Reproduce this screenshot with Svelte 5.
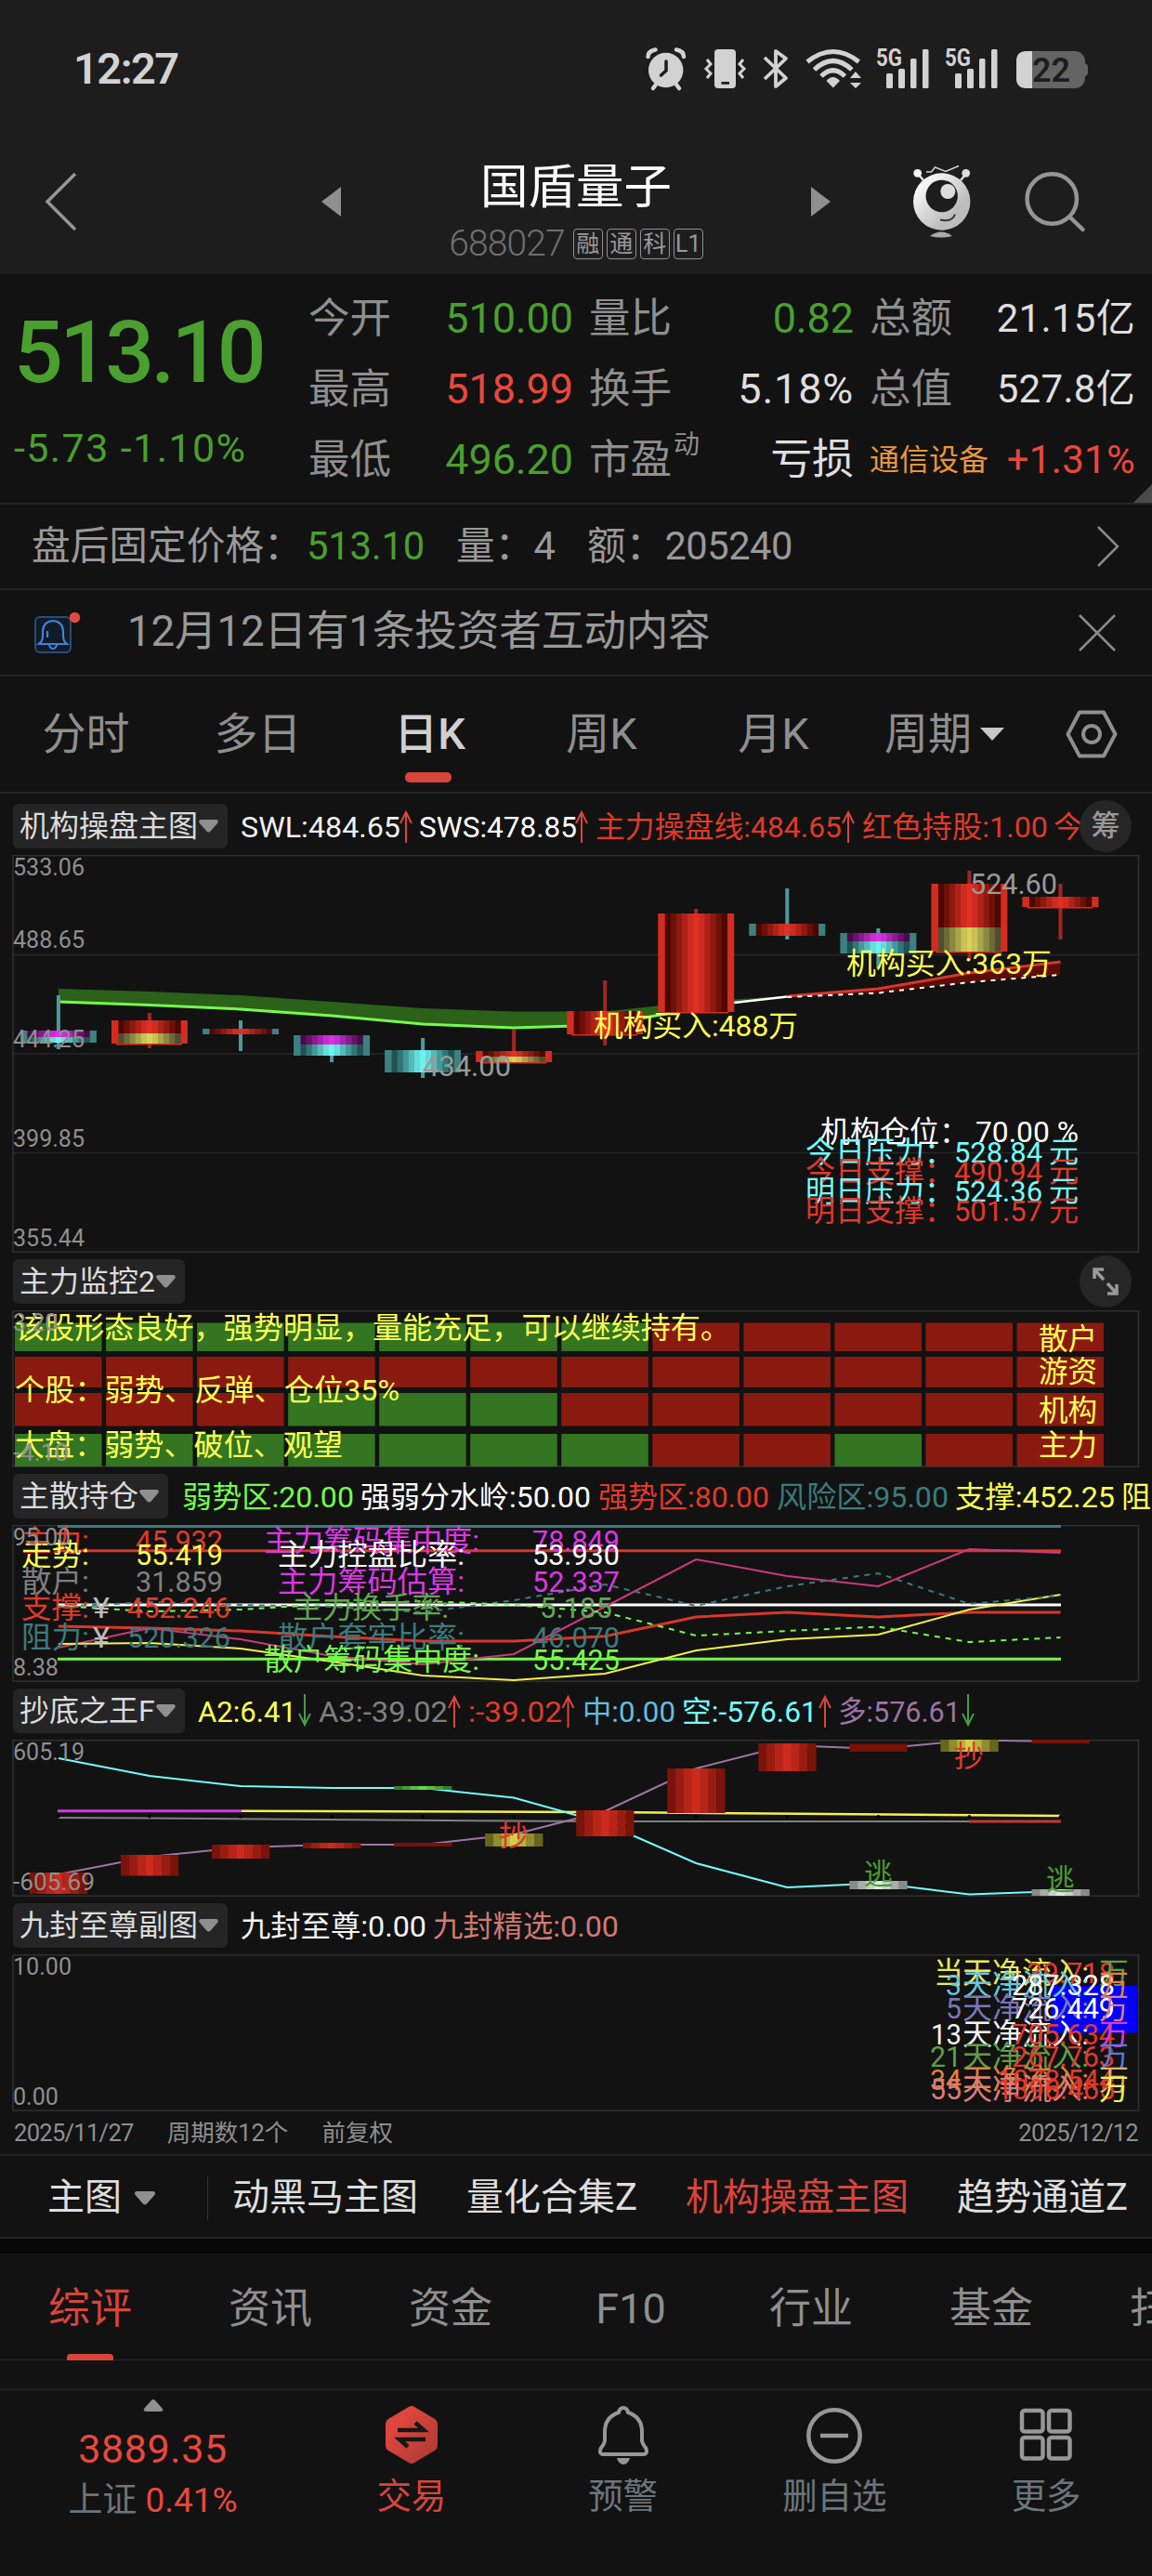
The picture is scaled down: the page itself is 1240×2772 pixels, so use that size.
<script lang="ts">
  type Label = { x: number; y: number; w?: number; t: string; c: string; s?: number };

  const RED = "#e0392b";
  const GREEN = "#75fb4c";
  const YELLOW = "#ffff55";
  const CYAN = "#75fbfd";
  const TEAL = "#3d7a7c";
  const MAGENTA = "#dc37e6";
  const GRAY = "#8f8f8f";

  const quotes = [
    { k: "今开", v: "510.00", c: "green" },
    { k: "量比", v: "0.82", c: "green" },
    { k: "总额", v: "21.15亿", c: "white small" },
    { k: "最高", v: "518.99", c: "red" },
    { k: "换手", v: "5.18%", c: "white wide" },
    { k: "总值", v: "527.8亿", c: "white small" },
    { k: "最低", v: "496.20", c: "green" },
    { k: "市盈", sup: "动", v: "亏损", c: "white" },
    { k: "通信设备", kc: "sector", v: "+1.31%", c: "red small" },
  ];

  const periods = ["分时", "多日", "日K", "周K", "月K"];
  const sections = ["综评", "资讯", "资金", "F10", "行业", "基金", "扫雷"];
  const presets = ["动黑马主图", "量化合集Z", "机构操盘主图", "趋势通道Z"];

  // twelve trading days, evenly spaced
  const cx = (i: number) => 62.9 + 98.05 * i;
  const path = (ys: number[], from = 0) =>
    ys.map((y, i) => `${cx(i + from).toFixed(1)},${y}`).join(" ");

  function mix(a: string, b: string, t: number) {
    const p = (s: string, i: number) => parseInt(s.slice(i, i + 2), 16);
    const m = [1, 3, 5].map((i) => Math.round(p(a, i) + (p(b, i) - p(a, i)) * t));
    return `rgb(${m.join(",")})`;
  }

  const shades: Record<string, [string, string]> = {
    red: ["#4d0700", "#e03024"],
    purple: ["#470a4b", "#dc30e6"],
    yellow: ["#4f4d30", "#d6d358"],
    cyan: ["#1f5252", "#70f0f0"],
    barRed: ["#7a130a", "#cc2b1d"],
    barYellow: ["#66661c", "#cfcf4a"],
    barGreen: ["#3a7a28", "#63d848"],
    barGray: ["#8a8a8a", "#dceadc"],
    flat: ["#771109", "#771109"],
  };

  // vertical strips that fake a cylinder, darkest at the edges
  function strips(x: number, w: number, n: number, kind: string) {
    const [dark, bright] = shades[kind];
    const half = (n - 1) / 2;
    return Array.from({ length: n }, (_, i) => ({
      x: x + (w / n) * i,
      w: w / n + 0.3,
      fill: mix(dark, bright, Math.min(1, (1 - Math.abs(i - half) / half) * 1.1)),
    }));
  }

  // wick top/bottom, body top/split/bottom, upper and lower fills
  const candles = [
    { wick: [1071, 1129], body: [1109, 1116, 1122], up: "purple", low: "cyan", rise: false },
    { wick: [1090, 1128], body: [1098, 1112, 1123], up: "red", low: "yellow", rise: true },
    { wick: [1098, 1131], body: [1107, 1113, 1113], up: "red", low: "red", rise: false },
    { wick: [1114, 1143], body: [1114, 1124, 1136], up: "purple", low: "cyan", rise: false },
    { wick: [1117, 1160], body: [1130, 1130, 1154], up: "cyan", low: "cyan", rise: false },
    { wick: [1108, 1143], body: [1131, 1137, 1143], up: "red", low: "yellow", rise: true },
    { wick: [1055, 1125], body: [1088, 1113, 1113], up: "red", low: "red", rise: true },
    { wick: [978, 1089], body: [983, 1089, 1089], up: "red", low: "red", rise: true },
    { wick: [956, 1011], body: [994, 1007, 1007], up: "red", low: "red", rise: false },
    { wick: [999, 1042], body: [1004, 1013, 1026], up: "purple", low: "cyan", rise: false },
    { wick: [937, 1033], body: [951, 998, 1024], up: "red", low: "yellow", rise: true },
    { wick: [951, 1011], body: [965, 976, 976], up: "red", low: "red", rise: true },
  ];

  const bandTop = [1064, 1067, 1071, 1078, 1085, 1088.5, 1088.5, 1078, 1072];
  const bandLow = [1078, 1081.5, 1086, 1093, 1102, 1106, 1103, 1085, 1072];

  const mainLabels: Label[] = [
    { x: 14, y: 942, w: 77, t: "533.06", c: GRAY, s: 26 },
    { x: 14, y: 1020, w: 77, t: "488.65", c: GRAY, s: 26 },
    { x: 14, y: 1127, w: 77, t: "444.25", c: GRAY, s: 26 },
    { x: 14, y: 1233.5, w: 77, t: "399.85", c: GRAY, s: 26 },
    { x: 14, y: 1340.5, w: 77, t: "355.44", c: GRAY, s: 26 },
    { x: 455, y: 1158, w: 95, t: "434.00", c: "#9a9a9a" },
    { x: 1044, y: 962, w: 94, t: "524.60", c: "#9a9a9a" },
    { x: 639, y: 1115, w: 220, t: "机构买入:488万", c: YELLOW },
    { x: 911, y: 1048, w: 221, t: "机构买入:363万", c: YELLOW },
    { x: 883, y: 1229, w: 160, t: "机构仓位：", c: "#fff" },
    { x: 1050, y: 1229, w: 111, t: "70.00 %", c: "#fff" },
    ...[
      ["今日压力：", "528.84", 1250.5, CYAN],
      ["今日支撑：", "490.94", 1271.5, RED],
      ["明日压力：", "524.36", 1292.5, CYAN],
      ["明日支撑：", "501.57", 1313.5, RED],
    ].flatMap(([k, v, y, c]: any) => [
      { x: 867, y, w: 160, t: k, c },
      { x: 1027, y, w: 95, t: v, c },
      { x: 1129, y, w: 32, t: "元", c },
    ]),
  ];

  // rows of the monitor heat map, 1 = red, 0 = green
  const heat = [
    { y: 1423.5, h: 30.5, cells: "000000011111" },
    { y: 1460, h: 33, cells: "111111111111" },
    { y: 1499, h: 35.5, cells: "111000111111" },
    { y: 1543, h: 35, cells: "000000011011" },
  ];

  const heatLabels: Label[] = [
    { x: 16, y: 1440, w: 770, t: "该股形态良好，强势明显，量能充足，可以继续持有。", c: YELLOW },
    { x: 16, y: 1507, w: 414, t: "个股：弱势、反弹、仓位35%", c: YELLOW },
    { x: 16, y: 1566, w: 353, t: "大盘：弱势、破位、观望", c: YELLOW },
    { x: 1118, y: 1451.5, w: 63, t: "散户", c: YELLOW },
    { x: 1118, y: 1486.5, w: 63, t: "游资", c: YELLOW },
    { x: 1118, y: 1528.5, w: 63, t: "机构", c: YELLOW },
    { x: 1118, y: 1565.5, w: 63, t: "主力", c: YELLOW },
    { x: 14, y: 1431.5, w: 48, t: "3.20", c: GRAY, s: 26 },
    { x: 14, y: 1571.5, w: 60, t: "-4.10", c: GRAY, s: 26 },
  ];

  const holdLabels: Label[] = [
    { x: 23, y: 1669, w: 73, t: "主力:", c: RED },
    { x: 146, y: 1669, w: 94, t: "45.932", c: RED },
    { x: 284, y: 1669, w: 232, t: "主力筹码集中度:", c: MAGENTA },
    { x: 573, y: 1669, w: 94, t: "78.849", c: MAGENTA },
    { x: 23, y: 1684, w: 73, t: "走势:", c: YELLOW },
    { x: 146, y: 1684, w: 94, t: "55.419", c: YELLOW },
    { x: 299, y: 1684, w: 201, t: "主力控盘比率:", c: "#fff" },
    { x: 573, y: 1684, w: 94, t: "53.930", c: "#fff" },
    { x: 23, y: 1713, w: 73, t: "散户:", c: "#7f7f7f" },
    { x: 146, y: 1713, w: 94, t: "31.859", c: "#7f7f7f" },
    { x: 299, y: 1713, w: 201, t: "主力筹码估算:", c: MAGENTA },
    { x: 573, y: 1713, w: 94, t: "52.337", c: MAGENTA },
    { x: 23, y: 1741, w: 73, t: "支撑:", c: RED },
    { x: 100, y: 1741, w: 18, t: "¥", c: "#bbb" },
    { x: 137, y: 1741, w: 111, t: "452.246", c: RED },
    { x: 315, y: 1741, w: 168, t: "主力换手率:", c: "#62a652" },
    { x: 581, y: 1741, w: 78, t: "5.185", c: "#62a652" },
    { x: 23, y: 1773, w: 73, t: "阻力:", c: TEAL },
    { x: 100, y: 1773, w: 18, t: "¥", c: "#bbb" },
    { x: 137, y: 1773, w: 111, t: "520.326", c: TEAL },
    { x: 299, y: 1773, w: 201, t: "散户套牢比率:", c: TEAL },
    { x: 573, y: 1773, w: 94, t: "46.070", c: TEAL },
    { x: 284, y: 1797, w: 232, t: "散户筹码集中度:", c: GREEN },
    { x: 573, y: 1797, w: 94, t: "55.425", c: GREEN },
    { x: 14, y: 1662.5, w: 62, t: "95.00", c: GRAY, s: 26 },
    { x: 14, y: 1803, w: 49, t: "8.38", c: GRAY, s: 26 },
  ];

  const bars = [
    [0, 2015, 2038, "barRed"],
    [1, 1996, 2018.5, "barRed"],
    [2, 1985, 2000, "barRed"],
    [3, 1983, 1989, "barRed"],
    [4, 1983, 1987, "flat"],
    [4, 1922, 1926, "barGreen"],
    [5, 1973, 1987, "barYellow"],
    [6, 1948, 1976, "barRed"],
    [7, 1903, 1951, "barRed"],
    [8, 1876, 1906, "barRed"],
    [9, 1876.5, 1885, "flat"],
    [9, 2024, 2033, "barGray"],
    [10, 1871, 1885, "barYellow"],
    [11, 1871, 1876, "flat"],
    [11, 2033, 2040, "barGray"],
  ] as [number, number, number, string][];

  const bottomLabels: Label[] = [
    { x: 14, y: 1893.5, w: 77, t: "605.19", c: GRAY, s: 26 },
    { x: 14, y: 2033.5, w: 88, t: "-605.69", c: GRAY, s: 26 },
    { x: 537, y: 1986, w: 32, t: "抄", c: RED },
    { x: 1027, y: 1901, w: 32, t: "抄", c: RED },
    { x: 930, y: 2028, w: 31, t: "逃", c: "#4b9b33" },
    { x: 1126, y: 2034, w: 31, t: "逃", c: "#4b9b33" },
  ];

  const flowLabels: Label[] = [
    { x: 14, y: 2125, w: 63, t: "10.00", c: GRAY, s: 26 },
    { x: 14, y: 2265, w: 49, t: "0.00", c: GRAY, s: 26 },
    ...[
      ["当", 1005, 32, "39.718", 1105, 2134, "#e8e85a", RED, "#5f9f45"],
      ["3", 1018, 17, "287.328", 1089, 2146.5, "#66c6de", "#fff", "#e0823c"],
      ["5", 1018, 17, "726.449", 1089, 2172, "#7b76b5", "#fff", "#d97d7d"],
      ["13", 1002, 33, "705.634", 1089, 2199.5, "#f2f2f2", RED, MAGENTA],
      ["21", 1001, 34, "267.763", 1089, 2224, "#5f9f45", RED, "#4f80dc"],
      ["34", 1001, 34, "1078.544", 1073, 2248.5, "#e0823c", RED, "#e0b060"],
      ["55", 1001, 34, "1396.465", 1073, 2258.5, "#d97d7d", RED, "#f0f05a"],
    ].flatMap(([d, dx, dw, v, vx, y, c, vc, uc]: any) => [
      { x: dx, y, w: dw, t: d, c },
      { x: 1036, y, w: 136, t: "天净流入:", c },
      { x: vx, y, w: 1200 - vx, t: v, c: vc },
      { x: 1183, y, w: 32, t: "万", c: uc },
    ]),
  ];

  const mainLegend: Label[] = [
    { x: 259, y: 36, w: 172, t: "SWL:484.65", c: "#f0f0f0" },
    { x: 451, y: 36, w: 170, t: "SWS:478.85", c: "#fff" },
    { x: 641, y: 36, w: 265, t: "主力操盘线:484.65", c: RED },
    { x: 928, y: 36, w: 200, t: "红色持股:1.00", c: RED },
    { x: 1134, y: 36, w: 32, t: "今", c: RED },
  ];
  const holdLegend: Label[] = [
    { x: 197, y: 36, w: 185, t: "弱势区:20.00", c: GREEN },
    { x: 389, y: 36, w: 248, t: "强弱分水岭:50.00", c: "#fff" },
    { x: 645, y: 36, w: 184, t: "强势区:80.00", c: RED },
    { x: 837, y: 36, w: 185, t: "风险区:95.00", c: TEAL },
    { x: 1029, y: 36, w: 172, t: "支撑:452.25", c: YELLOW },
    { x: 1208, y: 36, w: 32, t: "阻", c: YELLOW },
  ];
  const bottomLegend: Label[] = [
    { x: 214, y: 36, w: 106, t: "A2:6.41", c: YELLOW },
    { x: 344, y: 36, w: 139, t: "A3:-39.02", c: "#7f7f7f" },
    { x: 505, y: 36, w: 101, t: ":-39.02", c: RED },
    { x: 628, y: 36, w: 100, t: "中:0.00", c: "#62bede" },
    { x: 735, y: 36, w: 146, t: "空:-576.61", c: CYAN },
    { x: 903, y: 36, w: 132, t: "多:576.61", c: "#9e74a5" },
  ];
  const nineLegend: Label[] = [
    { x: 259, y: 36, w: 200, t: "九封至尊:0.00", c: "#f5f5f5" },
    { x: 466, y: 36, w: 200, t: "九封精选:0.00", c: "#d07a76" },
  ];
</script>

{#snippet labels(list: Label[])}
  {#each list as l}
    <text x={l.x} y={l.y} fill={l.c} font-size={l.s ?? 31.5} textLength={l.w} lengthAdjust="spacingAndGlyphs">{l.t}</text>
  {/each}
{/snippet}

{#snippet head(name: string, x: number, list: Label[], ups: number[], downs: number[])}
  <button class="pill">{name}<svg width="21" height="14" viewBox="0 0 21 14"><path d="M2 0h17q3 1 1 4l-7 8q-2.500 3-5 0L1 4q-2-3 1-4z" fill="#8f8f8f" /></svg></button>
  <svg class="legend" width={1240 - x} height="48" viewBox="{x} 0 {1240 - x} 48">
    {@render labels(list)}
    {#each ups as u}
      <path d="M{u} 42V10M{u - 6} 21L{u} 9L{u + 6} 21" stroke="#d8453b" stroke-width="2" fill="none" />
    {/each}
    {#each downs as d}
      <path d="M{d} 6V38M{d - 6} 27L{d} 39L{d + 6} 27" stroke="#4b9b47" stroke-width="2" fill="none" />
    {/each}
  </svg>
{/snippet}

{#snippet strip(x: number, w: number, n: number, kind: string, y1: number, y2: number)}
  {#each strips(x, w, n, kind) as s}
    <rect x={s.x} y={y1} width={s.w} height={y2 - y1} fill={s.fill} />
  {/each}
{/snippet}

<main>
  <header>
    <div class="status">
      <span class="time">12:27</span>
      <svg width="490" height="60" viewBox="688 44 490 60" fill="#d2d2d2">
        <circle cx="716.700" cy="75.500" r="18.700" />
        <path d="M697.500 61q0-6 8-7.500M736 61q0-6-8-7.500M706 91l-3 4M728 91l3 4" stroke="#d2d2d2" stroke-width="4.500" stroke-linecap="round" fill="none" />
        <path d="M717 66v10l-5.500 5" stroke="#1d1d1d" stroke-width="3.500" stroke-linecap="round" fill="none" />
        <rect x="769" y="53" width="23" height="42" rx="4" />
        <rect x="776.500" y="88" width="8.500" height="2.800" fill="#1d1d1d" />
        <path d="M761 64l4 5-5 5 5 5-4 5M800 64l-4 5 5 5-5 5 4 5" stroke="#d2d2d2" stroke-width="3" fill="none" />
        <path d="M823 62l23 22-11 9V55l11 8-23 22" stroke="#d2d2d2" stroke-width="3.800" fill="none" stroke-linejoin="round" />
        <g fill="none" stroke="#d2d2d2" stroke-width="5">
          <path d="M869 66.500q27.700-22 55.400 0" />
          <path d="M876.500 75q20.200-19 40.400 0" />
          <path d="M884 82q12.700-12.500 25.400 0" />
        </g>
        <path d="M889.500 87q7-8 14.500 0l-7.200 7.500z" />
        <path d="M915 84l6-7 6 7zM915 89h12l-6 6z" />
        {#each [0, 74] as dx}
          <text x={943 + dx} y="71" font-size="25" font-weight="700" textLength="28" lengthAdjust="spacingAndGlyphs">5G</text>
          <rect x={954 + dx} y="79" width="7" height="16" rx="1.500" />
          <rect x={967 + dx} y="74" width="7" height="21" rx="1.500" />
          <rect x={980 + dx} y="63" width="6.500" height="32" rx="1.500" />
          <rect x={993 + dx} y="53" width="6.500" height="42" rx="1.500" />
        {/each}
        <rect x="1094" y="55" width="74" height="40" rx="11" fill="#646464" />
        <path d="M1111 55h-6q-11 0-11 11v18q0 11 11 11h6z" />
        <path d="M1168 68q3 1 3 4v6q0 3-3 4z" fill="#646464" />
        <text x="1111" y="88" font-size="36" font-weight="600" fill="#1d1d1d" textLength="41" lengthAdjust="spacingAndGlyphs">22</text>
      </svg>
    </div>
    <div class="nav">
      <svg class="back" width="40" height="68" viewBox="0 0 40 68"><path d="M35 4L5 34l30 30" fill="none" stroke="#959595" stroke-width="3.500" /></svg>
      <svg width="21" height="34" viewBox="0 0 21 34"><path d="M21 1v32L0 17z" fill="#8f8f8f" /></svg>
      <div class="title">
        <h1>国盾量子</h1>
        <div class="code">
          <span>688027</span>
          <i>融</i><i>通</i><i>科</i><i>L1</i>
        </div>
      </div>
      <svg width="21" height="34" viewBox="0 0 21 34"><path d="M0 1v32l21-16z" fill="#8f8f8f" /></svg>
      <svg width="64" height="78" viewBox="982 178 64 78">
        <defs>
          <linearGradient id="face" x1="0" y1="0" x2="1" y2="1">
            <stop offset="0.200" stop-color="#f4f4f4" />
            <stop offset="0.700" stop-color="#bdbdbd" />
          </linearGradient>
        </defs>
        <path d="M988 187l6 7M1040 187l-6 7" stroke="#ddd" stroke-width="2.500" />
        <circle cx="987.700" cy="186.300" r="4.400" fill="#f4f4f4" />
        <circle cx="1039.700" cy="186.300" r="4.400" fill="#ddd" />
        <path d="M997 185h5.500l4-5 11.500 4.500 14-6" stroke="#d0d0d0" stroke-width="1.600" fill="none" />
        <circle cx="1013.700" cy="217" r="30.700" fill="url(#face)" />
        <circle cx="1013.700" cy="211" r="17.200" fill="#1d1d1d" />
        <circle cx="1020.300" cy="206" r="8" fill="#dcdcdc" />
        <path d="M1012 236.500q13 3 16-6" stroke="#333" stroke-width="2" fill="none" />
        <path d="M1001 254q12-9 24 0q-12 3-24 0z" fill="#aaa" />
      </svg>
      <svg width="68" height="68" viewBox="1100 182 68 68" fill="none" stroke="#959595" stroke-width="4.500" stroke-linecap="round">
        <circle cx="1131.300" cy="213" r="26.700" />
        <path d="M1151 233l13.500 13" />
      </svg>
    </div>
  </header>

  <section class="quote">
    <div class="last">
      <div class="price">513.10</div>
      <div class="change">-5.73 -1.10%</div>
    </div>
    <div class="grid">
      {#each quotes as q}
        <div class="cell">
          <span class="key {q.kc ?? ''}">{q.k}{#if q.sup}<sup>{q.sup}</sup>{/if}</span>
          <span class="val {q.c}">{q.v}</span>
        </div>
      {/each}
    </div>
    <svg class="corner" width="20" height="20" viewBox="0 0 20 20"><path d="M20 0v20H0z" fill="#4a4a4a" /></svg>
  </section>

  <section class="after">
    <span class="name">盘后固定价格：</span><b>513.10</b>
    <span class="vol">量：<em>4</em></span>
    <span class="amt">额：<em>205240</em></span>
    <svg width="26" height="46" viewBox="0 0 26 46"><path d="M2 2l21 21L2 44" fill="none" stroke="#8a8a8a" stroke-width="2.500" /></svg>
  </section>

  <section class="notice">
    <svg width="52" height="48" viewBox="36 655 52 48" fill="none">
      <rect x="38" y="662" width="38" height="38" rx="5" stroke="#294c78" stroke-width="2" fill="#121b26" />
      <path d="M42 691q4-3 4-9v-4q0-11 11-12 11 1 11 12v4q0 6 4 9zM53 692q1 4 4 4t4-4M51 677v7" stroke="#3f82d8" stroke-width="2.200" />
      <circle cx="80.500" cy="662.500" r="5.700" fill="#e04a3e" />
    </svg>
    <p>12月12日有1条投资者互动内容</p>
    <svg width="40" height="40" viewBox="0 0 40 40"><path d="M1 1l38 38M39 1L1 39" stroke="#8a8a8a" stroke-width="2.500" /></svg>
  </section>

  <nav class="periods">
    {#each periods as p}
      <span class:on={p === "日K"}>{p}</span>
    {/each}
    <span>周期<svg width="28" height="16" viewBox="0 0 28 16"><path d="M1 1h26L14 15z" fill="#c8c8c8" /></svg></span>
    <span>
      <svg width="56" height="54" viewBox="0 0 56 54" fill="none" stroke="#8f8f8f" stroke-width="4"><path d="M15 3.500h26L53.500 27 41 50.500H15L2.500 27z" stroke-linejoin="round" /><circle cx="28" cy="27" r="9" /></svg>
    </span>
  </nav>

  <div class="head first">
    {@render head("机构操盘主图", 245, mainLegend, [437, 626, 913], [])}
    <span class="round">筹</span>
  </div>
  <svg class="chart" width="1240" height="428" viewBox="0 920 1240 428">
    <g fill="none" stroke="#303030" stroke-width="1.500">
      <rect x="14" y="920.700" width="1211.500" height="426.500" />
      <path d="M14 1027.500H1225M14 1134H1225M14 1240.500H1225" stroke="#272727" />
    </g>
    <polygon points="{path(bandTop)} {[...bandLow].map((y, i) => `${cx(i)},${y}`).reverse().join(' ')}" fill="#2b6119" />
    <polyline points={path(bandLow.slice(0, 8))} fill="none" stroke={GREEN} stroke-width="3" />
    <polyline points="749,1086 790,1079 847,1072.500" fill="none" stroke="#fff" stroke-width="2.500" />
    <polygon points="{path([1072, 1064, 1047, 1035], 8)} 1141,1049 1043,1057 945,1068.500" fill="#5c0d08" />
    <polyline points={path([1072, 1064, 1047, 1035], 8)} fill="none" stroke="#d8362a" stroke-width="3" />
    <polyline points={path([1073, 1068.5, 1057, 1049], 8)} fill="none" stroke="#fff" stroke-width="2" stroke-dasharray="5 6" />
    {#each candles as c, i}
      {@const side = c.rise ? "#d32c20" : "#3d8080"}
      <rect x={cx(i) - 2} y={c.wick[0]} width="4" height={c.wick[1] - c.wick[0]} fill={c.rise ? "#a3271f" : "#4c9a9a"} />
      {#if c.rise}
        <rect x={cx(i) - 36} y={c.body[2]} width="71" height="1.500" fill={side} />
      {/if}
      <rect x={cx(i) - 41} y={c.body[0]} width="82" height={c.body[2] - c.body[0]} fill={side} />
      {@render strip(cx(i) - 33.5, 67, 11, c.up, c.body[0], c.body[1])}
      {@render strip(cx(i) - 33.5, 67, 11, c.low, c.body[1], c.body[2])}
    {/each}
    {@render labels(mainLabels)}
  </svg>

  <div class="head">
    {@render head("主力监控2", 200, [], [], [])}
    <span class="round">
      <svg width="30" height="30" viewBox="0 0 30 30" fill="none" stroke="#999" stroke-width="3.500"><path d="M13 2H3v10M3 2l10 11M17 28h10V18M27 28L17 17" /></svg>
    </span>
  </div>
  <svg class="chart" width="1240" height="169" viewBox="0 1410 1240 169">
    <rect x="14" y="1410.700" width="1211.500" height="167.500" fill="none" stroke="#303030" stroke-width="1.500" />
    {#each heat as row}
      {#each row.cells.split("") as v, i}
        <rect x={16 + 98.05 * i} y={row.y} width="93.500" height={row.h} fill={v === "1" ? "#8a1a10" : "#337520"} />
      {/each}
    {/each}
    {@render labels(heatLabels)}
  </svg>

  <div class="head">
    {@render head("主散持仓", 182, holdLegend, [], [])}
  </div>
  <svg class="chart" width="1240" height="169" viewBox="0 1641 1240 169">
    <rect x="14" y="1641.700" width="1211.500" height="167.500" fill="none" stroke="#303030" stroke-width="1.500" />
    <g fill="none" stroke-width="3">
      <path d="M62 1642.500H1142" stroke={TEAL} />
      <path d="M62 1668.700H1142" stroke="#d8362a" />
      <path d="M62 1727H1142" stroke="#fff" />
      <path d="M62 1785.300H1142" stroke={GREEN} />
      <polyline points={path([1750, 1752, 1755, 1761, 1766, 1766, 1760.7, 1740, 1735, 1740, 1735, 1735])} stroke="#d8362a" />
      <polyline points={path([1773, 1752, 1764, 1782, 1791, 1780, 1729, 1678, 1696, 1707, 1667, 1671])} stroke="#c93a7c" stroke-width="2" />
      <polyline points={path([1769, 1768, 1774, 1788, 1803, 1808, 1801, 1776, 1764, 1759, 1732, 1716])} stroke="#f3f04d" stroke-width="2" />
      <polyline points={path([1729, 1724, 1727, 1729, 1735, 1722, 1705, 1728, 1707, 1693, 1726, 1717])} stroke={TEAL} stroke-width="2" stroke-dasharray="6 6" />
      <polyline points={path([1728, 1734, 1732, 1726, 1723, 1727, 1735, 1760, 1755, 1750.5, 1767, 1762])} stroke={GREEN} stroke-width="2" stroke-dasharray="6 6" />
    </g>
    {@render labels(holdLabels)}
  </svg>

  <div class="head">
    {@render head("抄底之王F", 200, bottomLegend, [490, 612.5, 889], [329, 1043])}
  </div>
  <svg class="chart" width="1240" height="169" viewBox="0 1872 1240 169">
    <rect x="14" y="1872.700" width="1211.500" height="167.500" fill="none" stroke="#303030" stroke-width="1.500" />
    <g fill="none" stroke-width="2">
      <polyline points="62,1956 161,1956.500 553,1959.500 651,1960 1043,1960" stroke="#808080" />
      <path d="M1043 1960H1142" stroke="#c23a34" stroke-width="3" />
      <path d="M62 1948.700H260" stroke={MAGENTA} stroke-width="3" />
      <polyline points="260,1948.700 651,1950 1142,1954" stroke="#f3f04d" stroke-width="2.500" />
      <polyline points={path([2017, 1998, 1988, 1985, 1985, 1974, 1949, 1903, 1878, 1882, 1872.5, 1874])} stroke="#9e74a5" />
      <polyline points={path([1892, 1911, 1922, 1924, 1924, 1934.5, 1962, 2005, 2031, 2026.5, 2038.5, 2035])} stroke={CYAN} />
    </g>
    {#each [0, 1, 2, 3, 4, 5, 7, 8, 9, 10, 11] as i}
      <circle cx={cx(i)} cy="1954.700" r="1.800" fill="#000" />
    {/each}
    {#each bars as b}
      {@render strip(cx(b[0]) - 31, 62, 7, b[3], b[1], b[2])}
    {/each}
    {@render labels(bottomLabels)}
  </svg>

  <div class="head">
    {@render head("九封至尊副图", 245, nineLegend, [], [])}
  </div>
  <svg class="chart" width="1240" height="169" viewBox="0 2103 1240 169">
    <rect x="14" y="2103.700" width="1211.500" height="167.500" fill="none" stroke="#303030" stroke-width="1.500" />
    <rect x="1131" y="2137" width="94" height="50.500" fill="#0000fb" />
    {@render labels(flowLabels)}
  </svg>

  <div class="foot">
    <span class="date">2025/11/27</span><span>周期数12个</span><span>前复权</span><span class="date end">2025/12/12</span>
  </div>

  <div class="presets">
    <div class="pick">主图<svg width="24" height="15" viewBox="0 0 21 14"><path d="M2 0h17q3 1 1 4l-7 8q-2.500 3-5 0L1 4q-2-3 1-4z" fill="#8f8f8f" /></svg></div>
    {#each presets as p}
      <span class:on={p === "机构操盘主图"}>{p}</span>
    {/each}
  </div>

  <nav class="sections">
    {#each sections as s, i}
      <span class:on={i === 0}>{s}</span>
    {/each}
  </nav>

  <footer>
    <div class="index">
      <svg width="22" height="13" viewBox="0 0 22 13"><path d="M9 1q2-2 4 0l8 9q1 3-2 3H3q-3 0-2-3z" fill="#8f8f8f" /></svg>
      <strong>3889.35</strong>
      <p>上证<b>0.41%</b></p>
    </div>
    <div class="item on">
      <svg width="62" height="64" viewBox="0 0 62 64">
        <defs>
          <linearGradient id="hex" x1="0" y1="0" x2="1" y2="1">
            <stop offset="0.300" stop-color="#dc463c" />
            <stop offset="1" stop-color="#a83832" />
          </linearGradient>
        </defs>
        <path d="M28 2q3-2 6 0l22 13q3 2 3 5v24q0 3-3 5L34 62q-3 2-6 0L6 49q-3-2-3-5V20q0-3 3-5z" fill="url(#hex)" />
        <path d="M16 27h28l-9-8M46 37H18l9 8" fill="none" stroke="#161616" stroke-width="4.500" />
      </svg>
      交易
    </div>
    <div class="item">
      <svg width="62" height="64" viewBox="0 0 62 64" fill="none" stroke="#979797" stroke-width="4">
        <path d="M31 3q4 0 5 5 15 5 15 21v9q0 3 4 8 3 6-2 7H9q-5-1-2-7 4-5 4-8v-9q0-16 15-21 1-5 5-5z" />
        <path d="M24 57h14q-2 7-7 7t-7-7z" fill="#979797" stroke="none" />
      </svg>
      预警
    </div>
    <div class="item">
      <svg width="62" height="64" viewBox="0 0 62 64" fill="none" stroke="#979797" stroke-width="4.500"><circle cx="31" cy="33" r="27.700" /><path d="M16 33h30" /></svg>
      删自选
    </div>
    <div class="item">
      <svg width="62" height="64" viewBox="0 0 62 64" fill="none" stroke="#979797" stroke-width="4.500">
        {#each [[5, 6], [34, 6], [5, 35], [34, 35]] as [x, y]}
          <rect {x} {y} width="22.500" height="22.500" rx="3" />
        {/each}
      </svg>
      更多
    </div>
  </footer>
</main>

<style>
  :global(body) {
    background: #111;
  }

  main {
    width: 1240px;
    height: 2772px;
    overflow: hidden;
    background: #121212;
    color: #8f8f8f;
    font-family: Roboto, "Noto Sans CJK SC", sans-serif;
    line-height: 1.2;
  }

  svg {
    display: block;
    flex: none;
  }

  h1,
  p {
    margin: 0;
    font-weight: 400;
  }

  i,
  em {
    font-style: normal;
  }

  header {
    height: 295px;
    background: #1d1d1d;
  }

  .status {
    display: flex;
    justify-content: space-between;
    align-items: center;
    height: 94px;
    padding: 27px 62px 17px 79px;
  }

  .time {
    color: #d2d2d2;
    font-size: 47px;
    font-weight: 600;
    letter-spacing: -1.5px;
  }

  .nav {
    display: grid;
    grid-template-columns: 346px 21px 506px 109px 119px 1fr;
    align-items: center;
    height: 157px;
  }

  .back {
    margin-left: 46px;
  }

  .title {
    display: flex;
    flex-direction: column;
    align-items: center;
    gap: 11px;
    padding-top: 16px;
  }

  h1 {
    color: #fff;
    font-size: 51.5px;
    line-height: 64px;
  }

  .code {
    display: flex;
    align-items: center;
    gap: 4px;
    height: 34px;
    font-size: 39px;
    line-height: 34px;
    color: #6f6f6f;
  }

  .code span {
    letter-spacing: -0.9px;
    margin-right: 5px;
    font-weight: 300;
  }

  .code i {
    width: 30px;
    height: 31px;
    border: 1px solid #8f8f8f;
    border-radius: 4px;
    color: #999;
    font-size: 25px;
    line-height: 31px;
    text-align: center;
  }

  .quote {
    position: relative;
    display: flex;
    box-sizing: border-box;
    height: 248px;
    border-bottom: 2px solid #252525;
  }

  .last {
    width: 332px;
    box-sizing: border-box;
    padding: 35px 0 0 15px;
    color: #4a9f2f;
  }

  .price {
    font-size: 93px;
    font-weight: 500;
    line-height: 100px;
    letter-spacing: -3.7px;
  }

  .change {
    margin-top: 22px;
    font-size: 43px;
    line-height: 60px;
    letter-spacing: 1.4px;
    white-space: pre;
  }

  .grid {
    display: grid;
    grid-template-columns: 285px 285px 286px;
    grid-auto-rows: 76px;
    column-gap: 17px;
    padding-top: 10px;
  }

  .cell {
    display: flex;
    justify-content: space-between;
    align-items: center;
    line-height: 76px;
  }

  .key {
    font-size: 44.5px;
  }

  .key.sector {
    font-size: 32px;
    color: #e8963c;
  }

  .key sup {
    font-size: 28px;
    line-height: 0;
    vertical-align: 22px;
    margin-left: 2px;
  }

  .val {
    font-size: 45px;
    letter-spacing: -0.1px;
  }

  .val.small {
    font-size: 42px;
    letter-spacing: 0.3px;
  }

  .val.wide {
    letter-spacing: 0.8px;
  }

  .green {
    color: #4a9f2f;
  }

  .red {
    color: #e8483c;
  }

  .white {
    color: #dedede;
  }

  .corner {
    position: absolute;
    right: 0;
    bottom: 0;
  }

  .after,
  .notice {
    display: flex;
    align-items: center;
    box-sizing: border-box;
    border-bottom: 2px solid #222;
  }

  .after {
    height: 92px;
    padding: 0 34px;
    font-size: 41.7px;
    color: #999;
  }

  .after .name {
    width: 296px;
    white-space: nowrap;
  }

  .after b {
    width: 161px;
    color: #4a9f2f;
    font-weight: 400;
    letter-spacing: -0.2px;
  }

  .after em {
    letter-spacing: -0.5px;
  }

  .after .vol {
    width: 141px;
  }

  .after svg {
    margin-left: auto;
  }

  .notice {
    height: 93px;
    padding: 0 39px 0 36px;
    color: #999;
  }

  .notice p {
    flex: 1;
    padding-left: 49px;
    font-size: 45.7px;
    letter-spacing: -0.2px;
  }

  .periods {
    display: grid;
    grid-template-columns: repeat(5, 185px) 184px 1fr;
    box-sizing: border-box;
    height: 126px;
    border-bottom: 2px solid #252525;
    font-size: 47px;
  }

  .periods span {
    display: flex;
    align-items: center;
    justify-content: center;
    gap: 8px;
    position: relative;
  }

  .periods .on {
    color: #d0d0d0;
    font-weight: 500;
  }

  .periods .on::after {
    content: "";
    position: absolute;
    left: 66px;
    bottom: 10px;
    width: 50px;
    height: 11px;
    border-radius: 5px;
    background: #d8453b;
  }

  .head {
    position: relative;
    display: flex;
    align-items: center;
    box-sizing: border-box;
    height: 62px;
    padding-left: 14px;
  }

  .head.first {
    height: 66px;
    padding-top: 3px;
  }

  .pill {
    display: flex;
    align-items: center;
    flex: none;
    gap: 1px;
    height: 48px;
    padding: 0 10px 0 7px;
    border: 0;
    border-radius: 6px;
    background: #252525;
    color: #dcdcdc;
    font: inherit;
    font-size: 32px;
    line-height: 48px;
    white-space: nowrap;
  }

  .round {
    position: absolute;
    top: 3px;
    right: 22px;
    display: flex;
    align-items: center;
    justify-content: center;
    width: 56px;
    height: 56px;
    border-radius: 50%;
    background: #262626;
    color: #999;
    font-size: 31px;
    font-weight: 500;
  }

  .first .round {
    top: 7px;
  }

  .foot {
    display: flex;
    align-items: center;
    gap: 36px;
    height: 46px;
    padding: 0 15px;
    font-size: 25.5px;
  }

  .foot .date {
    letter-spacing: -0.7px;
  }

  .foot .end {
    margin-left: auto;
  }

  .presets {
    display: flex;
    align-items: center;
    gap: 52px;
    box-sizing: border-box;
    height: 91px;
    padding-top: 3px;
    border-top: 2px solid #252525;
    border-bottom: 2px solid #252525;
    color: #dedede;
    font-size: 40px;
    white-space: nowrap;
  }

  .presets .on {
    color: #d8453b;
  }

  .pick {
    display: flex;
    align-items: center;
    gap: 13px;
    box-sizing: border-box;
    width: 224px;
    height: 47px;
    margin-right: -26px;
    padding-left: 51px;
    border-right: 1px solid #333;
  }

  .sections {
    display: flex;
    box-sizing: border-box;
    height: 131px;
    border-top: 16px solid #070707;
    border-bottom: 1px solid #272727;
    font-size: 45px;
  }

  .sections span {
    position: relative;
    display: flex;
    flex: 0 0 194px;
    align-items: center;
    justify-content: center;
    padding-top: 6px;
    box-sizing: border-box;
  }

  .sections .on {
    color: #d8453b;
  }

  .sections .on::after {
    content: "";
    position: absolute;
    left: 72px;
    bottom: -1px;
    width: 50px;
    height: 7px;
    border-radius: 4px 4px 0 0;
    background: #d8453b;
  }

  footer {
    display: grid;
    grid-template-columns: 329px repeat(4, 1fr);
    margin-top: 30px;
    border-top: 3px solid #1c1c1c;
  }

  .index,
  .item {
    display: flex;
    flex-direction: column;
    align-items: center;
  }

  .index {
    padding-top: 9px;
    color: #e8483c;
  }

  .index strong {
    margin-top: 13px;
    font-size: 43px;
    font-weight: 400;
    line-height: 54px;
    letter-spacing: 0.6px;
  }

  .index p {
    margin-top: 2px;
    color: #6c757b;
    font-size: 37px;
    line-height: 54px;
  }

  .index b {
    margin-left: 9px;
    color: #e8483c;
    font-weight: 400;
  }

  .item {
    gap: 9px;
    padding-top: 15px;
    color: #6c757b;
    font-size: 37.5px;
    line-height: 50px;
  }

  .item.on {
    color: #d8453b;
  }
</style>
